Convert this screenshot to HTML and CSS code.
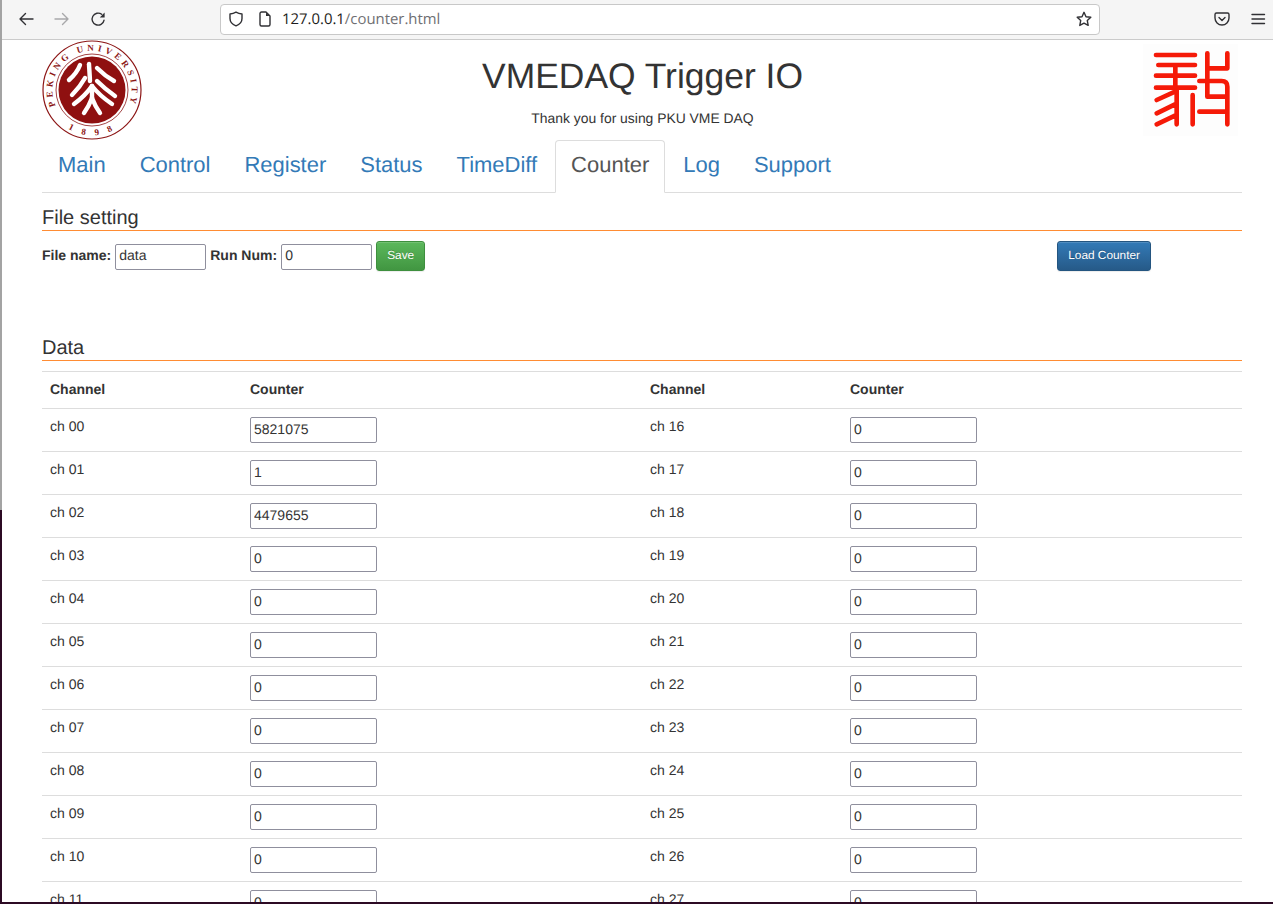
FILE: index.html
```html
<!DOCTYPE html>
<html lang="en">
<head>
<meta charset="utf-8">
<title>VMEDAQ Trigger IO</title>
<link rel="stylesheet" href="styles.css">
</head>
<body>
<div class="desktop">
  <div class="edge"></div>
  <div class="window">
    <div class="toolbar">
      <svg class="tb-icon" viewBox="0 0 16 16"><path d="M15 8H2M7.500 2.500 2 8l5.500 5.500"/></svg>
      <svg class="tb-icon faded" viewBox="0 0 16 16"><path d="M1 8h13M8.500 2.500 14 8l-5.500 5.500"/></svg>
      <svg class="tb-icon" viewBox="0 0 16 16"><path d="M14 9.300A6 6 0 1 1 11.700 3.300"/><path class="icon-fill" d="M14.600 1.600V6.400H9.800z"/></svg>
      <div class="urlbar">
        <svg class="url-icon" viewBox="0 0 16 16"><path d="M8 1.200c2 1.200 4 1.700 6 1.800v4.500c0 3.500-2.400 6-6 7.300-3.600-1.300-6-3.800-6-7.300V3c2-.1 4-.6 6-1.800z"/></svg>
        <svg class="url-icon page" viewBox="0 0 16 16"><path d="M3 2.500A1.500 1.500 0 0 1 4.500 1H9l4 4v8.500a1.500 1.500 0 0 1-1.500 1.500h-7A1.500 1.500 0 0 1 3 13.500z"/><path class="icon-fill" d="M9 1.500V5h3.500z"/></svg>
        <span class="url-text"><span class="url-host">127.0.0.1</span>/counter.html</span>
        <svg class="url-icon star" viewBox="0 0 16 16"><path d="M8 1.300l2 4.400 4.800.6-3.500 3.300.9 4.800L8 12.100l-4.200 2.300.9-4.800L1.200 6.300 6 5.700z"/></svg>
      </div>
      <div class="tb-right">
        <svg class="tb-icon" viewBox="0 0 16 16"><path d="M2.500 2h11A1.500 1.500 0 0 1 15 3.500V7A7 7 0 0 1 1 7V3.500A1.500 1.500 0 0 1 2.500 2zM5 6.500l3 3 3-3"/></svg>
        <svg class="tb-icon" viewBox="0 0 16 16"><path d="M2 3.500h12.500M2 8h12.500M2 12.500h12.500"/></svg>
      </div>
    </div>

    <div class="container">
      <header class="page-head">
        <svg class="logo" viewBox="0 0 100 100">
          <defs>
            <path id="arc-top" d="M14 66.500A39.500 39.500 0 1 1 86 66.500"/>
            <path id="arc-bottom" d="M14 78A46 46 0 0 0 86 78"/>
          </defs>
          <circle class="ring" cx="50" cy="50" r="49"/>
          <circle class="ring-thin" cx="50" cy="50" r="36"/>
          <circle class="disk" cx="50" cy="50" r="33.500"/>
          <g class="emblem">
            <path d="M47 24Q47.500 33 48 41"/>
            <path d="M38 25Q35 33 27 40"/>
            <path d="M43 38Q38 47 30 55"/>
            <path d="M55 28Q63 36 72 41"/>
            <path d="M55 41Q63 49 73 56"/>
            <path d="M50 46Q43 56 32 64"/>
            <path d="M50 46Q58 56 70 64"/>
            <path d="M50 46V58"/>
            <path d="M50 58Q47 66 42 73"/>
            <path d="M50 58Q53 66 58 73"/>
          </g>
          <text class="seal-text"><textPath href="#arc-top" startOffset="50%" text-anchor="middle">PEKING UNIVERSITY</textPath></text>
          <text class="seal-text"><textPath href="#arc-bottom" startOffset="50%" text-anchor="middle">1 8 9 8</textPath></text>
        </svg>
        <div class="titles">
          <h1 class="title">VMEDAQ Trigger IO</h1>
          <p class="subtitle">Thank you for using PKU VME DAQ</p>
        </div>
        <svg class="stamp" viewBox="-21 -3 285 276">
          <path d="M18 30H135M25 60H135M18 92H135M18 128H135M76 60V128M20 165 75 140M20 205 75 178M20 238 75 212M80 128V238M128 150V238M172 25V100M232 25V70M172 70H232M148 108H215Q232 108 232 125V238M172 108V155H232M148 200H232"/>
        </svg>
      </header>

      <nav class="tabs">
        <a class="tab">Main</a>
        <a class="tab">Control</a>
        <a class="tab">Register</a>
        <a class="tab">Status</a>
        <a class="tab">TimeDiff</a>
        <a class="tab active">Counter</a>
        <a class="tab">Log</a>
        <a class="tab">Support</a>
      </nav>

      <h3 class="section-title first">File setting</h3>
      <div class="file-row">
        <div class="file-form">
          <label class="field-label">File name:</label>
          <input class="field" type="text" value="data">
          <label class="field-label">Run Num:</label>
          <input class="field" type="text" value="0">
          <button class="btn btn-success">Save</button>
        </div>
        <button class="btn btn-primary">Load Counter</button>
      </div>

      <h3 class="section-title data">Data</h3>
      <table class="counters">
        <thead>
          <tr><th>Channel</th><th>Counter</th><th>Channel</th><th>Counter</th></tr>
        </thead>
        <tbody>
          <tr><td>ch 00</td><td><input class="count" type="text" value="5821075"></td><td>ch 16</td><td><input class="count" type="text" value="0"></td></tr>
          <tr><td>ch 01</td><td><input class="count" type="text" value="1"></td><td>ch 17</td><td><input class="count" type="text" value="0"></td></tr>
          <tr><td>ch 02</td><td><input class="count" type="text" value="4479655"></td><td>ch 18</td><td><input class="count" type="text" value="0"></td></tr>
          <tr><td>ch 03</td><td><input class="count" type="text" value="0"></td><td>ch 19</td><td><input class="count" type="text" value="0"></td></tr>
          <tr><td>ch 04</td><td><input class="count" type="text" value="0"></td><td>ch 20</td><td><input class="count" type="text" value="0"></td></tr>
          <tr><td>ch 05</td><td><input class="count" type="text" value="0"></td><td>ch 21</td><td><input class="count" type="text" value="0"></td></tr>
          <tr><td>ch 06</td><td><input class="count" type="text" value="0"></td><td>ch 22</td><td><input class="count" type="text" value="0"></td></tr>
          <tr><td>ch 07</td><td><input class="count" type="text" value="0"></td><td>ch 23</td><td><input class="count" type="text" value="0"></td></tr>
          <tr><td>ch 08</td><td><input class="count" type="text" value="0"></td><td>ch 24</td><td><input class="count" type="text" value="0"></td></tr>
          <tr><td>ch 09</td><td><input class="count" type="text" value="0"></td><td>ch 25</td><td><input class="count" type="text" value="0"></td></tr>
          <tr><td>ch 10</td><td><input class="count" type="text" value="0"></td><td>ch 26</td><td><input class="count" type="text" value="0"></td></tr>
          <tr><td>ch 11</td><td><input class="count" type="text" value="0"></td><td>ch 27</td><td><input class="count" type="text" value="0"></td></tr>
        </tbody>
      </table>
    </div>
  </div>
</div>
</body>
</html>
```

FILE: styles.css
```css
* { box-sizing: border-box; }

html, body {
  margin: 0;
  height: 904px;
  overflow: hidden;
}

body {
  font-family: "Liberation Sans", Arial, sans-serif;
  font-size: 14px;
  line-height: 20px;
  color: #333;
  text-rendering: geometricPrecision;
}

.desktop {
  display: flex;
  height: 904px;
  background: #2c0a24;
}

.edge {
  width: 2px;
  height: 510px;
  background: #a3a3a3;
}

.window {
  flex: 1;
  height: 902px;
  overflow: hidden;
  background: #fff;
}

/* browser chrome */
.toolbar {
  display: flex;
  align-items: center;
  gap: 20px;
  height: 40px;
  padding: 0 7px 1px 16px;
  background: #f5f5f5;
  border-bottom: 1px solid #cbcbcb;
}

.tb-icon, .url-icon {
  flex: none;
  width: 16px;
  height: 16px;
  fill: none;
  stroke: #303034;
  stroke-width: 1.400;
  stroke-linecap: round;
  stroke-linejoin: round;
}

.tb-icon.faded { stroke: #a8a8aa; }

.icon-fill {
  fill: #303034;
  stroke: none;
}

.urlbar {
  display: flex;
  align-items: center;
  width: 880px;
  height: 31px;
  margin-left: 94px;
  padding: 0 7px;
  background: #fff;
  border: 1px solid #c8c8c8;
  border-radius: 4px;
}

.url-icon.page { margin-left: 13px; }

.url-text {
  margin-left: 9px;
  font-family: "Open Sans", "Noto Sans", sans-serif;
  font-size: 14.900px;
  color: #6f6f73;
}

.url-host { color: #1d1d20; }

.url-icon.star { margin-left: auto; }

.tb-right {
  display: flex;
  gap: 20px;
  margin-left: auto;
}

/* page */
.container {
  width: 1200px;
  margin-left: 40px;
}

.page-head {
  display: flex;
  height: 100px;
}

.logo {
  flex: none;
  width: 100px;
  height: 100px;
}

.ring { fill: #fff; stroke: #8c1515; stroke-width: 1.200; }
.ring-thin { fill: none; stroke: #8c1515; stroke-width: .8; }
.disk { fill: #8f1010; }

.emblem path {
  fill: none;
  stroke: #fff;
  stroke-width: 4.400;
  stroke-linecap: round;
}

.seal-text {
  font-family: "Liberation Serif", serif;
  font-size: 9px;
  font-weight: 700;
  letter-spacing: 3.600px;
  fill: #8c1515;
}

.titles {
  flex: 1;
  text-align: center;
}

.title {
  margin: 16px 0 0;
  font-size: 35.450px;
  font-weight: 400;
  line-height: 40px;
}

.subtitle {
  margin: 12px 0 0;
  font-size: 13.900px;
}

.stamp {
  flex: none;
  align-self: flex-end;
  width: 95px;
  height: 92px;
  margin: 0 4px 4px 0;
  fill: none;
  stroke: #f51a08;
  stroke-width: 14;
  stroke-linecap: round;
  stroke-linejoin: round;
  background: #fdfdfd;
}

.tabs {
  display: flex;
  gap: 2px;
  border-bottom: 1px solid #ddd;
}

.tab {
  padding: 8px 15px 12px;
  margin-bottom: -1px;
  font-size: 21.970px;
  line-height: 31px;
  color: #337ab7;
  border: 1px solid transparent;
  border-radius: 4px 4px 0 0;
}

.tab.active {
  color: #555;
  background: #fff;
  border-color: #ddd #ddd #fff;
}

.section-title {
  margin: 0;
  padding: 1px 0;
  font-size: 20px;
  font-weight: 400;
  line-height: 22px;
  border-bottom: 1px solid #ff8c33;
}

.section-title.first { margin-top: 13px; }
.section-title.data { margin-top: 65px; }

.file-row {
  display: flex;
  justify-content: space-between;
  align-items: flex-start;
  padding-right: 91px;
  margin-top: 10px;
}

.file-form {
  display: flex;
  align-items: center;
  gap: 4px;
}

.field-label {
  font-weight: 700;
  line-height: 20px;
  margin-top: -2px;
}

.field, .count {
  height: 26px;
  padding: 0 3px 2px;
  font-family: "Liberation Sans", Arial, sans-serif;
  font-size: 14px;
  color: #333;
  background: #fff;
  border: 1px solid #8f8f9d;
  border-radius: 2px;
  text-rendering: geometricPrecision;
}

.field {
  width: 91px;
  margin-top: 2px;
  padding: 1px 3px 5px;
}

.count {
  display: block;
  width: 127px;
}

.btn {
  height: 30px;
  padding: 4px 10px 6px;
  font-family: "Liberation Sans", Arial, sans-serif;
  font-size: 11.850px;
  line-height: 18px;
  color: #fff;
  text-shadow: 0 -1px 0 rgba(0,0,0,.2);
  border: 1px solid;
  border-radius: 3px;
  box-shadow: inset 0 1px 0 rgba(255,255,255,.15), 0 1px 1px rgba(0,0,0,.075);
  text-rendering: geometricPrecision;
}

.btn-success {
  background: linear-gradient(to bottom, #5cb85c, #419641);
  border-color: #3e8f3e;
}

.btn-primary {
  background: linear-gradient(to bottom, #337ab7, #265a88);
  border-color: #245580;
}

.counters {
  width: 1200px;
  margin-top: 10px;
  border-collapse: collapse;
  table-layout: fixed;
}

.counters th, .counters td {
  padding: 8px;
  text-align: left;
  vertical-align: top;
  border-top: 1px solid #ddd;
}

.counters th { padding: 7px 8px 9px; }

.counters th:nth-child(odd), .counters td:nth-child(odd) { width: 200px; }
.counters th:nth-child(even), .counters td:nth-child(even) { width: 400px; }

.counters td:nth-child(odd) { padding-top: 7px; }
```
